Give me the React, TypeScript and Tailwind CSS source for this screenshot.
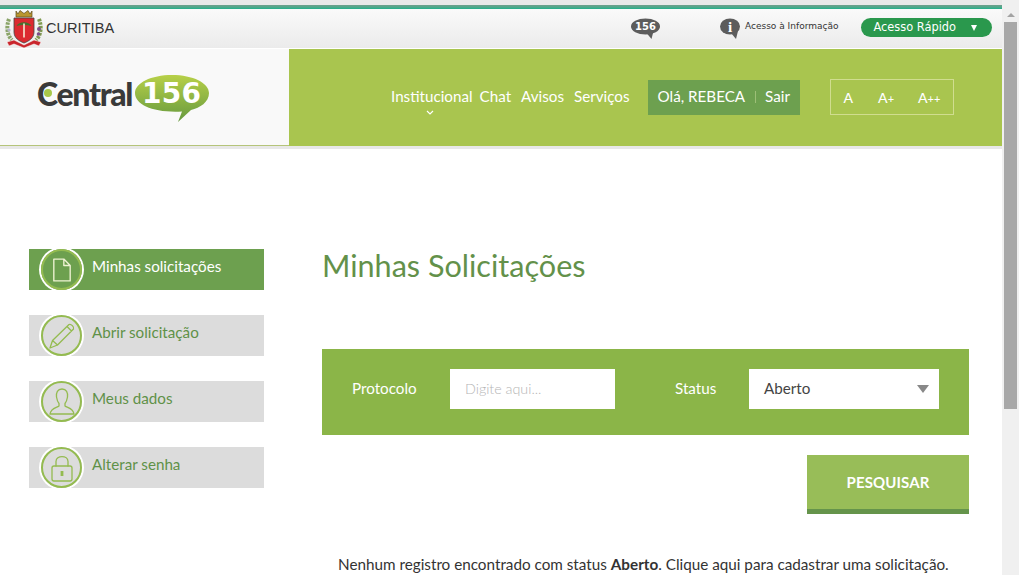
import React from "react";

const font = "font-['Lato','Liberation_Sans',sans-serif]";

function CoatOfArms() {
  return (
    <svg width="38" height="38" viewBox="0 0 38 38" aria-hidden="true">
      <path d="M11 1 L13 4 L15 0.5 L19 3.5 L23 0.5 L25 4 L27 1 L27 7 L11 7 Z" fill="#b8962f" stroke="#5b4c1c" strokeWidth="0.7" />
      <path d="M4 9 C1 17 2 25 7 30" fill="none" stroke="#8aa468" strokeWidth="4" strokeDasharray="2.5 1" />
      <path d="M34 9 C37 17 36 25 31 30" fill="none" stroke="#7f9a4f" strokeWidth="4" strokeDasharray="2.5 1" />
      <circle cx="34" cy="19" r="2" fill="#7c4f8a" />
      <circle cx="33.5" cy="24" r="1.8" fill="#7c4f8a" />
      <circle cx="4" cy="20" r="1.6" fill="#b3b3cf" />
      <path d="M9 8 H29 V22 C29 28 24 31 19 33 C14 31 9 28 9 22 Z" fill="#dc2a30" stroke="#444" strokeWidth="0.8" />
      <path d="M11.5 16 C14 11 24 11 26.5 16 C22 14.5 16 14.5 11.5 16 Z" fill="#47702e" />
      <rect x="18.2" y="13.5" width="1.6" height="14" fill="#f7e9d2" />
      <path d="M2 32 L9 30 L19 35 L29 30 L36 32 L34 36 L29 34 L19 38 L9 34 L4 36 Z" fill="#c9252c" stroke="#fff" strokeWidth="0.5" />
    </svg>
  );
}

function Central156() {
  return (
    <div className="relative h-[51px] w-[172px]">
      <span className="absolute left-0 top-[4px] text-[32px] font-black leading-[36px] tracking-[-1.3px] text-[#3a3a3a]">Central</span>
      <span className="absolute left-[7px] top-[17px] h-[8px] w-[8px] rounded-full bg-[#a8c84a]" />
      <svg className="absolute left-[97px] top-0" width="76" height="51" viewBox="0 0 76 51" aria-hidden="true">
        <defs>
          <linearGradient id="bubble" x1="0" y1="0" x2="0" y2="1">
            <stop offset="0" stopColor="#b7d048" />
            <stop offset="1" stopColor="#66993f" />
          </linearGradient>
        </defs>
        <path d="M38 3 C59 3 75 11 75 21 C75 30 66 36 57 38 L44 50 L48 39.5 C20 41 1 33 1 21 C1 11 17 3 38 3 Z" fill="url(#bubble)" />
      </svg>
      <span className="absolute left-[105px] top-[3px] font-['DejaVu_Sans',sans-serif] text-[28px] font-bold leading-[38px] tracking-[0.3px] text-white">156</span>
    </div>
  );
}

function SmallBubble({ children, w }: { children: React.ReactNode; w: number }) {
  return (
    <svg width={w} height="22" viewBox={`0 0 ${w} 22`} aria-hidden="true">
      <ellipse cx={w / 2} cy="8.5" rx={w / 2} ry="8" fill="#5c5c5c" />
      <path d={`M${w / 2 + 1} 15 L${w / 2 + 6} 21 L${w / 2 + 8} 13 Z`} fill="#5c5c5c" />
      {children}
    </svg>
  );
}

function Circle({ children }: { children: React.ReactNode }) {
  return (
    <span className="absolute left-[12px] top-0 flex h-[41px] w-[41px] items-center justify-center rounded-full border-[2px] border-[#94bb50] shadow-[0_0_0_2px_#fff]">
      {children}
    </span>
  );
}

const stroke = { fill: "none", stroke: "#94bb50", strokeWidth: 1.3, strokeLinejoin: "round" as const, strokeLinecap: "round" as const };

const items = [
  {
    label: "Minhas solicitações",
    active: true,
    icon: (
      <svg width="20" height="26" viewBox="0 0 22 28" aria-hidden="true">
        <path d="M2 2 H13 L20 9 V26 H2 Z M13 2 V9 H20" fill="none" stroke="#eef2d2" strokeWidth="1.5" strokeLinejoin="round" />
      </svg>
    ),
  },
  {
    label: "Abrir solicitação",
    icon: (
      <svg width="30" height="30" viewBox="0 0 30 30" aria-hidden="true">
        <path d="M3 27 L5.5 19.5 L22 3.5 C24 2.5 27.5 6 26.5 8 L10.5 24 Z M5.5 19.5 L10.5 24 M20 5.5 L24.5 10" {...stroke} />
      </svg>
    ),
  },
  {
    label: "Meus dados",
    icon: (
      <svg width="30" height="30" viewBox="0 0 30 30" aria-hidden="true">
        <path d="M15 2 C10.5 2 9 5.5 9.5 10 C10 13 10.8 15 12 16.5 V19 C9.5 21 4 21 3 27 H27 C26 21 20.5 21 18 19 V16.5 C19.2 15 20 13 20.5 10 C21 5.5 19.5 2 15 2 Z" {...stroke} />
      </svg>
    ),
  },
  {
    label: "Alterar senha",
    icon: (
      <svg width="26" height="30" viewBox="0 0 26 30" aria-hidden="true">
        <path d="M7 13 V8.5 C7 2 19 2 19 8.5 V13" {...stroke} />
        <rect x="3" y="13" width="20" height="15" rx="2" {...stroke} />
        <rect x="11.6" y="18" width="2.8" height="5" fill="#94bb50" />
      </svg>
    ),
  },
];

export default function App() {
  return (
    <div className={`${font} flex h-[575px] w-[1019px] overflow-hidden bg-white text-[#333]`}>
      <div className="flex w-[1002px] shrink-0 flex-col">
        <div className="h-[5px] bg-[#e9e9e9]" />
        <div className="h-[4px] bg-gradient-to-b from-[#6f9f8c] to-[#14b08a]" />
        <header className="flex h-[39px] items-center bg-gradient-to-b from-[#fafafa] to-[#ebebeb]">
          <div className="flex w-[631px] shrink-0 items-center gap-[3px] pl-[5px]">
            <CoatOfArms />
            <span className="font-['Liberation_Sans',sans-serif] text-[14.6px] leading-none text-[#333]">CURITIBA</span>
          </div>
          <div className="flex h-full items-center">
            <SmallBubble w={29}>
              <text x="14.5" y="12" textAnchor="middle" fontSize="10" fontWeight="700" fill="#fff" fontFamily="DejaVu Sans">156</text>
            </SmallBubble>
            <div className="ml-[60px] flex items-center gap-[5px]">
              <SmallBubble w={20}>
                <text x="10" y="14" textAnchor="middle" fontSize="15" fontWeight="700" fill="#fff" fontFamily="Liberation Serif">i</text>
              </SmallBubble>
              <span className="mb-[4px] font-['DejaVu_Sans',sans-serif] text-[9px] leading-none text-[#333]">Acesso à Informação</span>
            </div>
            <div className="ml-[23px] mb-[2px] flex h-[19px] w-[131px] items-center rounded-full bg-[#2a984d] pl-[12px] font-['DejaVu_Sans',sans-serif] text-[11.4px] text-white">
              <span>Acesso Rápido</span>
              <span className="ml-[15px] h-0 w-0 border-x-[3.5px] border-t-[6px] border-x-transparent border-t-white" />
            </div>
          </div>
        </header>
        <div className="h-px bg-white" />
        <div className="flex h-[97px]">
          <div className="flex w-[289px] items-center border-b border-[#b5c47a] bg-[#f9f9f9] pl-[37px]">
            <Central156 />
          </div>
          <nav className="flex flex-1 items-center bg-[#a9c54f] pl-[102px] text-[15.2px] leading-none text-white">
            <div className="relative mb-[2px]">
              Institucional
              <svg className="absolute left-[35px] top-[21px]" width="8" height="5" viewBox="0 0 8 5" aria-hidden="true">
                <path d="M1 1 L4 4 L7 1" fill="none" stroke="#fff" strokeWidth="1.2" />
              </svg>
            </div>
            <span className="mb-[2px] ml-[7px]">Chat</span>
            <span className="mb-[2px] ml-[10px]">Avisos</span>
            <span className="mb-[2px] ml-[10px]">Serviços</span>
            <div className="ml-[18px] flex h-[35px] w-[152px] items-center bg-[#6da04f] pb-[2px] pl-[10px]">
              <span>Olá, REBECA</span>
              <span className="ml-[10px] mr-[9px] h-[12px] w-px bg-[#9dbf77]" />
              <span>Sair</span>
            </div>
            <div className="mb-[2px] ml-[30px] flex h-[36px] w-[124px] items-center border border-[#d0dd8f] pl-[13px] pt-[2px] text-[14px] font-medium">
              <span>A</span>
              <span className="ml-[25px]">A<span className="text-[11px]">+</span></span>
              <span className="ml-[24px]">A<span className="text-[11px]">++</span></span>
            </div>
          </nav>
        </div>
        <div className="h-[3px] bg-[#e8e8e8]" />
        <main className="flex flex-1 pl-[29px] pr-[33px] pt-[100px]">
          <aside className="flex w-[235px] shrink-0 flex-col gap-[25px]">
            {items.map((it) => (
              <div
                key={it.label}
                className={`relative h-[41px] pl-[63px] text-[15.2px] leading-[34px] ${it.active ? "bg-[#6da04f] text-white" : "bg-[#dcdcdc] text-[#5f9148]"}`}
              >
                <Circle>{it.icon}</Circle>
                {it.label}
              </div>
            ))}
          </aside>
          <section className="ml-[58px] min-w-0 flex-1">
            <h1 className="-mt-px text-[30.6px] font-normal leading-[36px] text-[#63914a]">Minhas Solicitações</h1>
            <form className="mt-[65px] flex h-[86px] items-start bg-[#8bb548] pl-[30px] pt-[20px] text-[15.2px] text-white">
              <label className="w-[98px] leading-[38px]">Protocolo</label>
              <div className="flex h-[40px] w-[165px] items-center bg-white pb-[1px] pl-[15px] text-[14.3px] font-light text-[#b5b5b5]">Digite aqui...</div>
              <label className="ml-[60px] w-[74px] leading-[38px]">Status</label>
              <div className="flex h-[40px] w-[190px] items-center justify-between bg-white pl-[15px] pr-[10px] text-[#444]">
                <span className="mb-[2px]">Aberto</span>
                <span className="h-0 w-0 border-x-[6.5px] border-t-[8px] border-x-transparent border-t-[#888]" />
              </div>
            </form>
            <div className="mt-[20px] flex justify-end">
              <div className="flex h-[59px] w-[162px] items-center justify-center border-b-[5px] border-[#65944b] bg-[#98bd58] text-[15px] font-bold tracking-[0.1px] text-white">PESQUISAR</div>
            </div>
            <p className="mt-[40px] whitespace-nowrap pl-[16px] text-[15.25px] leading-[20px] text-[#333]">
              Nenhum registro encontrado com status <b>Aberto</b>. Clique aqui para cadastrar uma solicitação.
            </p>
          </section>
        </main>
      </div>
      <div className="flex w-[17px] shrink-0 flex-col bg-[#f0f0f0]">
        <div className="flex h-[22px] items-center justify-center pt-[7px]">
          <span className="h-0 w-0 border-x-[4px] border-b-[4px] border-x-transparent border-b-[#a3a3a3]" />
        </div>
        <div className="mx-[2px] h-[387px] bg-[#a8a8a8]" />
      </div>
    </div>
  );
}
